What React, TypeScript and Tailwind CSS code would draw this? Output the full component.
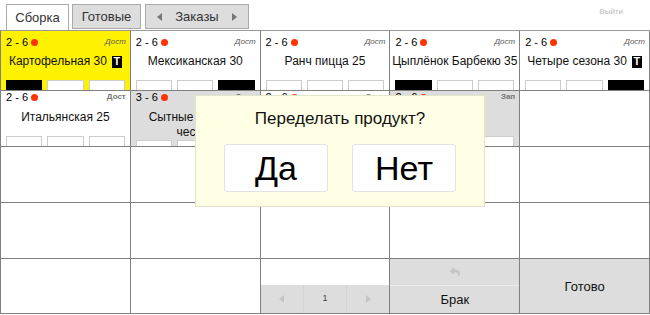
import { FaReply } from "react-icons/fa";

type Card = {
  range?: string;
  lines?: string[];
  t?: boolean;
  boxes?: number[];
  bg?: "yellow" | "gray" | "white";
  tag?: string;
  tagStyle?: "italic" | "bold";
};

const row1: Card[] = [
  { range: "2 - 6", lines: ["Картофельная 30"], t: true, boxes: [1, 0, 0], bg: "yellow", tag: "Дост" },
  { range: "2 - 6", lines: ["Мексиканская 30"], boxes: [0, 0, 1], tag: "Дост" },
  { range: "2 - 6", lines: ["Ранч пицца 25"], boxes: [0, 0, 0], tag: "Дост" },
  { range: "2 - 6", lines: ["Цыплёнок Барбекю 35"], boxes: [1, 0, 0], tag: "Дост" },
  { range: "2 - 6", lines: ["Четыре сезона 30"], t: true, boxes: [0, 0, 1], tag: "Дост" },
];

// second row is mostly under the dialog
const row2: Card[] = [
  { range: "2 - 6", lines: ["Итальянская 25"], boxes: [0, 0, 0], tag: "Дост", tagStyle: "bold" },
  { range: "3 - 6", lines: ["Сытные палочки", "чеснок"], boxes: [0, 0, 0], bg: "gray", tag: "Дост" },
  { range: "2 - 6", lines: [], boxes: [0, 0, 0], tag: "Дост" },
  { range: "2 - 6", lines: [], boxes: [0, 0, 0], bg: "gray", tag: "Зап", tagStyle: "bold" },
  {},
];

function OrderCard({ card, first }: { card: Card; first: boolean }) {
  const bg =
    card.bg === "yellow" ? "bg-[#fff200]" : card.bg === "gray" ? "bg-[#dddddd]" : "bg-white";
  if (!card.range) return <div className="border-r border-b border-[#808080] bg-white" />;
  return (
    <div className={`flex flex-col border-r border-b border-[#808080] ${bg} ${first ? "pt-[6px]" : "pt-[1px]"}`}>
      <div className="flex h-[10px] items-start justify-between pl-[5px] pr-[4px]">
        <div className="flex items-center gap-[3px] text-[11px] leading-[10px] text-black">
          <span>{card.range}</span>
          <span className="h-[7px] w-[7px] rounded-full bg-[#ff3300]" />
        </div>
        <span
          className={
            card.tagStyle === "bold"
              ? "text-[8px] leading-[10px] font-bold text-[#777]"
              : "text-[8px] leading-[10px] italic text-[#555]"
          }
        >
          {card.tag}
        </span>
      </div>
      <div className={`${first ? "mt-[7px]" : "mt-[8px]"} flex flex-col items-center text-center text-[12px] leading-[15px] text-[#111]`}>
        {card.lines!.map((l, i) => (
          <div key={i} className="flex items-center whitespace-nowrap">
            <span>{l}</span>
            {card.t && i === 0 && (
              <span className="ml-[5px] flex h-[12px] w-[10px] items-center justify-center bg-black text-[11px] font-bold leading-none text-white">
                T
              </span>
            )}
          </div>
        ))}
      </div>
      <div className="mt-auto flex h-[10px] gap-[5px] px-[5px]">
        {card.boxes!.map((b, i) => (
          <div
            key={i}
            className={b ? "flex-1 border border-b-0 border-black bg-black" : "flex-1 border border-b-0 border-[#cccccc] bg-white"}
          />
        ))}
      </div>
    </div>
  );
}

function Tri({ dir, className }: { dir: "l" | "r"; className: string }) {
  return (
    <svg width="5" height="8" viewBox="0 0 5 8" className={className}>
      {dir === "l" ? <path d="M5 0 L0 4 L5 8 Z" fill="currentColor" /> : <path d="M0 0 L5 4 L0 8 Z" fill="currentColor" />}
    </svg>
  );
}

export default function App() {
  return (
    <div className="relative h-[315px] w-[650px] overflow-hidden bg-white font-['Liberation_Sans',Arial,sans-serif]">
      {/* tabs */}
      <div className="flex h-[31px] items-end gap-[3px] border-b border-[#999] pl-[6px]">
        <div className="flex h-[26px] w-[63px] items-center justify-center border border-b-0 border-[#aaa] bg-white text-[13px] text-[#333]">
          Сборка
        </div>
        <div className="mb-[1px] flex h-[25px] w-[69px] items-center justify-center border border-[#aaa] bg-[#dddddd] text-[13px] text-[#333]">
          Готовые
        </div>
        <div className="mb-[1px] ml-[1px] flex h-[25px] w-[104px] items-center justify-center gap-[9px] border border-[#aaa] bg-[#dddddd] text-[13px] text-[#333]">
          <Tri dir="l" className="text-[#777]" />
          <span className="mx-[4px]">Заказы</span>
          <Tri dir="r" className="text-[#777]" />
        </div>
        <div className="mb-[12px] ml-auto mr-[27px] text-[8px] text-[#bbb]">Выйти</div>
      </div>

      {/* order grid */}
      <div className="grid grid-cols-5 grid-rows-[60px_56px_56px_56px_55px] border-l border-[#808080]">
        {row1.map((c, i) => (
          <OrderCard key={`a${i}`} card={c} first />
        ))}
        {row2.map((c, i) => (
          <OrderCard key={`b${i}`} card={c} first={false} />
        ))}
        {Array.from({ length: 12 }).map((_, i) => (
          <div key={`e${i}`} className="border-r border-b border-[#808080]" />
        ))}
        <div className="flex flex-col border-r border-b border-[#808080]">
          <div className="flex-1" />
          <div className="flex h-[28px] bg-[#dddddd] text-[9px] text-[#444]">
            <div className="flex flex-1 items-center justify-center border-r border-[#d3d3d3]">
              <Tri dir="l" className="text-[#c4c4c4]" />
            </div>
            <div className="flex flex-1 items-center justify-center border-r border-[#d3d3d3]">1</div>
            <div className="flex flex-1 items-center justify-center">
              <Tri dir="r" className="text-[#c4c4c4]" />
            </div>
          </div>
        </div>
        <div className="flex flex-col border-r border-b border-[#808080] bg-[#dddddd]">
          <div className="flex h-[27px] items-center justify-center border-b border-[#ebebeb] text-[#c4c4c4]">
            <FaReply size={10} />
          </div>
          <div className="flex flex-1 items-center justify-center text-[13px] text-[#111]">Брак</div>
        </div>
        <div className="flex items-center justify-center border-r border-b border-[#808080] bg-[#dddddd] pt-[2px] text-[13px] text-[#111]">
          Готово
        </div>
      </div>

      {/* confirm dialog */}
      <div className="absolute left-[195px] top-[95px] flex h-[112px] w-[290px] flex-col items-center border border-[#e4e4cc] bg-[#ffffe6]">
        <div className="mt-[13px] text-[17px] leading-[20px] text-[#111]">Переделать продукт?</div>
        <div className="mt-[15px] flex gap-[24px]">
          <div className="flex h-[48px] w-[104px] items-center justify-center rounded-[3px] border border-[#e2e2e2] bg-white text-[34px] text-black">
            Да
          </div>
          <div className="flex h-[48px] w-[104px] items-center justify-center rounded-[3px] border border-[#e2e2e2] bg-white text-[34px] text-black">
            Нет
          </div>
        </div>
      </div>
    </div>
  );
}
